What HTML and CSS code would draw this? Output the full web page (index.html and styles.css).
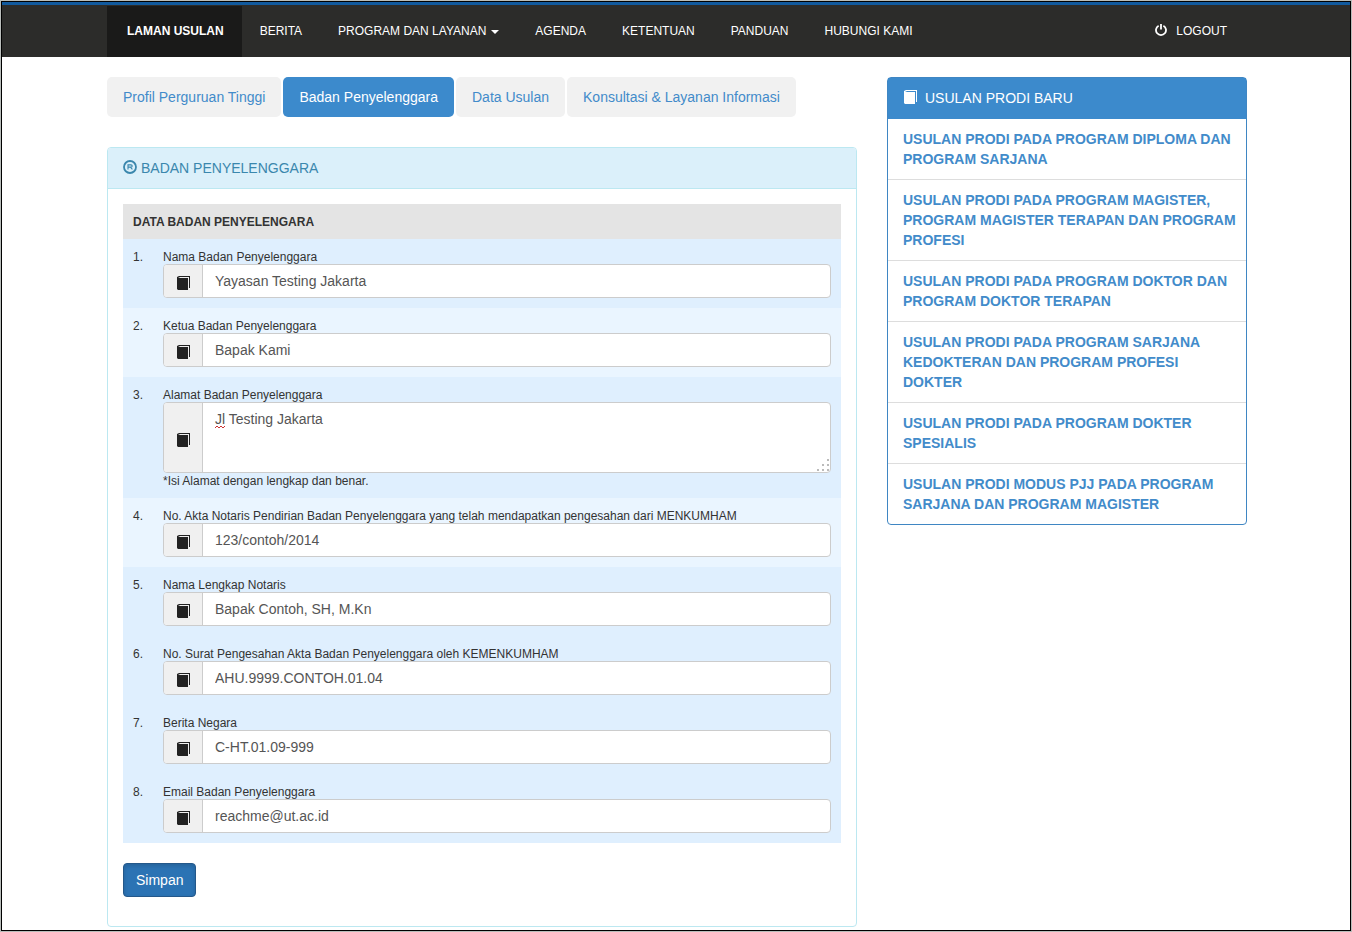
FILE: index.html
```html
<!DOCTYPE html>
<html lang="id">
<head>
<meta charset="utf-8">
<meta name="viewport" content="width=device-width, initial-scale=1">
<title>Badan Penyelenggara</title>
<link rel="stylesheet" href="styles.css">
</head>
<body>
<svg class="sprite" aria-hidden="true">
  <symbol id="book" viewBox="0 0 14 14">
    <path d="M2 0H13V12H12V1H3L1 2H0V1Z" fill="currentColor"/>
    <path d="M0 2H11V14H1L0 13Z" fill="currentColor"/>
  </symbol>
</svg>
<div class="frame">
  <header class="topbar">
    <nav class="container nav">
      <a class="nav-link active" href="#">LAMAN USULAN</a>
      <a class="nav-link" href="#">BERITA</a>
      <a class="nav-link" href="#">PROGRAM DAN LAYANAN <span class="caret"></span></a>
      <a class="nav-link" href="#">AGENDA</a>
      <a class="nav-link" href="#">KETENTUAN</a>
      <a class="nav-link" href="#">PANDUAN</a>
      <a class="nav-link" href="#">HUBUNGI KAMI</a>
      <a class="nav-link logout" href="#"><svg class="power" viewBox="0 0 12 12" aria-hidden="true"><path d="M3.6 1.7A5 5 0 1 0 8.4 1.7" fill="none" stroke="currentColor" stroke-width="1.8"/><path d="M6 0V5.6" stroke="currentColor" stroke-width="1.8"/></svg>LOGOUT</a>
    </nav>
  </header>
  <div class="container columns">
    <main class="main">
      <nav class="tabs">
        <a class="tab" href="#">Profil Perguruan Tinggi</a>
        <a class="tab current" href="#">Badan Penyelenggara</a>
        <a class="tab" href="#">Data Usulan</a>
        <a class="tab" href="#">Konsultasi &amp; Layanan Informasi</a>
      </nav>
      <section class="panel">
        <h1 class="panel-title"><svg class="mark" viewBox="0 0 14 14" aria-hidden="true"><circle cx="7" cy="7" r="6" fill="none" stroke="currentColor" stroke-width="1.8"/><path d="M5 9.4V4.9H8Q9.2 4.9 9.2 6T8 7.1H5M7.4 7.1L9.4 9.4" fill="none" stroke="currentColor" stroke-width="1.1"/></svg>BADAN PENYELENGGARA</h1>
        <form class="panel-body">
          <table class="fields">
            <thead><tr><th colspan="2">DATA BADAN PENYELENGARA</th></tr></thead>
            <tbody>
              <tr><td class="num">1.</td><td><label for="f1">Nama Badan Penyelenggara</label>
                <div class="group"><span class="addon"><svg class="book"><use href="#book"/></svg></span><input class="control" id="f1" type="text" value="Yayasan Testing Jakarta"></div></td></tr>
              <tr class="light"><td class="num">2.</td><td><label for="f2">Ketua Badan Penyelenggara</label>
                <div class="group"><span class="addon"><svg class="book"><use href="#book"/></svg></span><input class="control" id="f2" type="text" value="Bapak Kami"></div></td></tr>
              <tr><td class="num">3.</td><td><label for="f3">Alamat Badan Penyelenggara</label>
                <div class="group tall"><span class="addon"><svg class="book"><use href="#book"/></svg></span><textarea class="control area" id="f3" spellcheck="false">Jl Testing Jakarta</textarea>
                  <svg class="squiggle" viewBox="0 0 10 4" aria-hidden="true"><path d="M0 3L2 1L4 3L6 1L8 3L10 1" fill="none" stroke="#c33"/></svg>
                  <svg class="grip" viewBox="0 0 12 12" aria-hidden="true"><path d="M10 0h2v2h-2zM5 5h2v2h-2zM10 5h2v2h-2zM0 10h2v2h-2zM5 10h2v2h-2zM10 10h2v2h-2z" fill="#bbb"/></svg></div>
                <p class="hint">*Isi Alamat dengan lengkap dan benar.</p></td></tr>
              <tr class="light"><td class="num">4.</td><td><label for="f4">No. Akta Notaris Pendirian Badan Penyelenggara yang telah mendapatkan pengesahan dari MENKUMHAM</label>
                <div class="group"><span class="addon"><svg class="book"><use href="#book"/></svg></span><input class="control" id="f4" type="text" value="123/contoh/2014"></div></td></tr>
              <tr><td class="num">5.</td><td><label for="f5">Nama Lengkap Notaris</label>
                <div class="group"><span class="addon"><svg class="book"><use href="#book"/></svg></span><input class="control" id="f5" type="text" value="Bapak Contoh, SH, M.Kn"></div></td></tr>
              <tr><td class="num">6.</td><td><label for="f6">No. Surat Pengesahan Akta Badan Penyelenggara oleh KEMENKUMHAM</label>
                <div class="group"><span class="addon"><svg class="book"><use href="#book"/></svg></span><input class="control" id="f6" type="text" value="AHU.9999.CONTOH.01.04"></div></td></tr>
              <tr><td class="num">7.</td><td><label for="f7">Berita Negara</label>
                <div class="group"><span class="addon"><svg class="book"><use href="#book"/></svg></span><input class="control" id="f7" type="text" value="C-HT.01.09-999"></div></td></tr>
              <tr><td class="num">8.</td><td><label for="f8">Email Badan Penyelenggara</label>
                <div class="group"><span class="addon"><svg class="book"><use href="#book"/></svg></span><input class="control" id="f8" type="text" value="reachme@ut.ac.id"></div></td></tr>
            </tbody>
          </table>
          <button class="save" type="button">Simpan</button>
        </form>
      </section>
    </main>
    <aside class="side">
      <h2 class="side-title"><svg class="book"><use href="#book"/></svg>USULAN PRODI BARU</h2>
      <a class="side-link" href="#">USULAN PRODI PADA PROGRAM DIPLOMA DAN PROGRAM SARJANA</a>
      <a class="side-link" href="#">USULAN PRODI PADA PROGRAM MAGISTER, PROGRAM MAGISTER TERAPAN DAN PROGRAM PROFESI</a>
      <a class="side-link" href="#">USULAN PRODI PADA PROGRAM DOKTOR DAN PROGRAM DOKTOR TERAPAN</a>
      <a class="side-link" href="#">USULAN PRODI PADA PROGRAM SARJANA KEDOKTERAN DAN PROGRAM PROFESI DOKTER</a>
      <a class="side-link" href="#">USULAN PRODI PADA PROGRAM DOKTER SPESIALIS</a>
      <a class="side-link" href="#">USULAN PRODI MODUS PJJ PADA PROGRAM SARJANA DAN PROGRAM MAGISTER</a>
    </aside>
  </div>
</div>
</body>
</html>
```
FILE: styles.css
```css
* { box-sizing: border-box; }

body {
  margin: 0;
  padding: 1px;
  background: #b9bdba;
  color: #333;
  font: 14px/20px "Liberation Sans", Arial, sans-serif;
}

a { text-decoration: none; }
.sprite { display: none; }

.frame {
  min-height: calc(100vh - 2px);
  border: 1px solid #000;
  background: #fff;
}

.container {
  max-width: 1142px;
  margin: 0 auto;
  padding-left: 2px;
}

.topbar {
  border-top: 3px solid #115a9e;
  background: #2c2c2a;
}

.nav { display: flex; padding-top: 1px; }

.nav-link {
  display: flex;
  align-items: center;
  padding: 15px 18px;
  color: #fff;
  font-size: 12px;
  line-height: 21px;
  white-space: nowrap;
}

.nav-link.active {
  padding-left: 20px;
  background: #1a1a19;
  font-weight: bold;
}

.nav-link.logout { margin-left: auto; padding-right: 20px; }
.power { width: 12px; height: 12px; margin: 0 9px 3px 0; }

.caret {
  margin-left: 5px;
  border: 4px solid transparent;
  border-top-color: #fff;
  border-bottom: 0;
}

.columns {
  display: grid;
  grid-template-columns: 25fr 12fr;
  align-items: start;
  gap: 30px;
  padding-top: 20px;
  padding-bottom: 3px;
}

.main { min-width: 0; }

.tabs { display: flex; gap: 2px; margin-bottom: 30px; }

.tab {
  padding: 10px 16px;
  border-radius: 5px;
  background: #f1f1f1;
  color: #428bca;
}

.tab.current { background: #3c8acc; color: #fff; }

.panel { border: 1px solid #bce8f1; border-radius: 4px; }

.panel-title {
  display: flex;
  align-items: center;
  gap: 4px;
  margin: 0;
  padding: 10px 15px;
  border-bottom: 1px solid #bce8f1;
  border-radius: 3px 3px 0 0;
  background: #dbf0fa;
  color: #3a87ad;
  font-size: 14px;
  font-weight: normal;
}

.mark { width: 14px; height: 14px; margin-bottom: 2px; }
.panel-body { padding: 15px 15px 29px; }

.fields {
  width: 100%;
  border-collapse: collapse;
  background: #dfeffe;
  font-size: 12px;
  line-height: 14px;
}

.fields th { padding: 11px 10px 10px; background: #e4e4e4; text-align: left; }
.fields td { padding: 11px 10px 10px 0; vertical-align: top; }
.fields .num { width: 40px; padding-left: 10px; }
.light { background: #eaf5ff; }
.fields label { display: block; }
.hint { margin: 0; padding-top: 1px; }

.group {
  position: relative;
  display: flex;
  height: 34px;
  border: 1px solid #ccc;
  border-radius: 4px;
  background: #fff;
}

.group.tall { height: 71px; }

.addon {
  display: flex;
  align-items: center;
  justify-content: center;
  flex: none;
  width: 39px;
  padding: 4px 0 0 2px;
  border-right: 1px solid #ccc;
  border-radius: 3px 0 0 3px;
  background: #f0f0f0;
  color: #222;
}

.book { width: 14px; height: 14px; }

.control {
  flex: 1;
  min-width: 0;
  padding: 6px 12px;
  border: 0;
  border-radius: 3px;
  background: transparent;
  color: #555;
  font: 14px/20px "Liberation Sans", Arial, sans-serif;
}

.area { resize: none; }
.squiggle { position: absolute; left: 51px; top: 22px; width: 10px; height: 4px; }
.grip { position: absolute; right: 1px; bottom: 1px; width: 12px; height: 12px; }

.save {
  margin-top: 20px;
  padding: 6px 12px;
  border: 1px solid #24588a;
  border-radius: 4px;
  background: #2b73b4;
  box-shadow: inset 0 2px 4px rgba(0, 0, 0, 0.15);
  color: #fff;
  font: 14px/20px "Liberation Sans", Arial, sans-serif;
}

.side {
  min-width: 0;
  border: 1px solid #3f86c3;
  border-radius: 4px;
}

.side-title {
  display: flex;
  align-items: center;
  gap: 7px;
  margin: 0;
  padding: 10px 16px;
  border-bottom: 1px solid #3c8acc;
  background: #3c8acc;
  color: #fff;
  font-size: 14px;
  font-weight: normal;
}

.side-title .book { margin-bottom: 2px; }

.side-link {
  display: block;
  padding: 10px 8px 10px 15px;
  color: #428bca;
  font-weight: bold;
}

.side-link + .side-link { border-top: 1px solid #ddd; }
```
